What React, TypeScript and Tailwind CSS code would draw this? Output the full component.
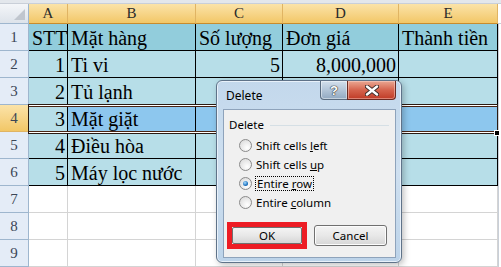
import React from "react";

const serif = { fontFamily: '"Liberation Serif", "Times New Roman", serif' };
const ui = { fontFamily: '"Noto Sans", "Open Sans", sans-serif' };

type Cell = { t?: string; r?: boolean };

const data: Cell[][] = [
  [{ t: "STT" }, { t: "Mặt hàng" }, { t: "Số lượng" }, { t: "Đơn giá" }, { t: "Thành tiền" }],
  [{ t: "1", r: true }, { t: "Ti vi" }, { t: "5", r: true }, { t: "8,000,000", r: true }, {}],
  [{ t: "2", r: true }, { t: "Tủ lạnh" }, {}, {}, {}],
  [{ t: "3", r: true }, { t: "Mặt giặt" }, {}, {}, {}],
  [{ t: "4", r: true }, { t: "Điều hòa" }, {}, {}, {}],
  [{ t: "5", r: true }, { t: "Máy lọc nước" }, {}, {}, {}],
  [{}, {}, {}, {}, {}],
  [{}, {}, {}, {}, {}],
  [{}, {}, {}, {}, {}],
];

function Radio({ checked }: { checked?: boolean }) {
  return (
    <span className="relative inline-flex items-center justify-center w-[13px] h-[13px] shrink-0 rounded-full border border-[#8a8a8a] bg-[radial-gradient(circle_at_65%_70%,#ffffff,#e2e2e2_70%,#d0d0d0)]">
      {checked && (
        <span className="w-[5px] h-[5px] rounded-full bg-[radial-gradient(circle_at_40%_35%,#a8dcff,#1f74c0_60%,#0b3f78)]" />
      )}
    </span>
  );
}

function Option({ pre, key1, post, checked }: { pre: string; key1: string; post: string; checked?: boolean }) {
  return (
    <div className="h-[15px] flex items-center gap-[4px]">
      <Radio checked={checked} />
      <span
        className={
          checked
            ? "border border-dotted border-black px-[1px] leading-[13px] -ml-[1px]"
            : "leading-[15px]"
        }
      >
        {pre}
        <u>{key1}</u>
        {post}
      </span>
    </div>
  );
}

export default function App() {
  return (
    <div className="relative w-[501px] h-[267px] overflow-hidden bg-white">
      <div className="h-[4px] bg-[#e3e7ec] border-b border-[#c9cfd8]" />
      <div className="grid grid-cols-[29px_39px_128px_87px_116px_99px_3px]" style={serif}>
        {/* header row */}
        <div className="h-[20px] flex items-end justify-end p-[3px] border-r border-b border-[#9eb6ce] bg-gradient-to-b from-[#f4f6f9] to-[#dde3ea]">
          <div className="w-0 h-0 border-l-[11px] border-l-transparent border-b-[11px] border-b-[#c0c6ce]" />
        </div>
        {["A", "B", "C", "D", "E"].map((c) => (
          <div
            key={c}
            className="h-[20px] flex items-center justify-center text-[15px] text-[#2a2a2a] border-r border-b border-r-[#e0b463] border-b-[#c88c2e] bg-gradient-to-b from-[#fbe3a8] to-[#f2c766]"
          >
            {c}
          </div>
        ))}
        <div className="h-[20px] border-b border-[#c9cfd8] bg-white" />

        {data.map((row, i) => {
          const rn = i + 1;
          const inTable = rn <= 6;
          const sel = rn === 4;
          return (
            <React.Fragment key={rn}>
              <div
                className={
                  "h-[27px] flex items-center justify-center text-[15px] text-[#3b4656] border-r border-b " +
                  (sel
                    ? "bg-gradient-to-b from-[#fbe3a8] to-[#f2c766] border-r-[#c88c2e] border-b-[#e0b463]"
                    : "bg-[#e4ecf7] border-[#9eb6ce]")
                }
              >
                {rn}
              </div>
              {row.map((c, j) => {
                let bg = "bg-white";
                if (inTable) bg = rn === 1 ? "bg-[#92cddc]" : "bg-[#b7dee8]";
                if (sel && j > 0) bg = "bg-[#8dc7ee]";
                return (
                  <div
                    key={j}
                    className={
                      "h-[27px] flex items-end overflow-visible whitespace-nowrap text-[20px] leading-[23px] text-black border-r border-b " +
                      (inTable ? "border-black " : "border-[#d4d4d4] ") +
                      bg +
                      (c.r ? " justify-end pr-[2px]" : " justify-start pl-[3px]")
                    }
                  >
                    {c.t}
                  </div>
                );
              })}
              <div className="h-[27px] bg-white border-l border-[#c9cfd8]" />
            </React.Fragment>
          );
        })}
      </div>

      {/* selection overlay on row 4 */}
      <div className="absolute left-[28px] top-[104px] w-[470px] h-[30px] border border-[#2a1a12] shadow-[inset_0_1px_0_#ffffff,inset_0_-1px_0_#ffffff,inset_0_2px_0_#4a2413,inset_0_-2px_0_#4a2413]" />
      <div className="absolute left-[494px] top-[130px] w-[6px] h-[6px] bg-black border border-white" />

      {/* Dialog window */}
      <div
        className="absolute left-[216px] top-[80px] w-[186px] h-[183px] flex flex-col rounded-[6px] border border-[#5f7389] bg-gradient-to-b from-[#c3d8ec] via-[#cfe0f0] to-[#bcd3e9] shadow-[inset_0_0_0_1px_#e8f1fa,2px_2px_6px_rgba(0,0,0,0.25)]"
        style={ui}
      >
        {/* title bar */}
        <div className="h-[28px] shrink-0 flex items-start pl-[9px] pr-[5px]">
          <div className="pt-[6px] text-[12px] leading-[18px] text-black">Delete</div>
          <div className="ml-auto flex">
            <div className="w-[28px] h-[19px] rounded-bl-[4px] border border-t-0 border-[#5a6c80] bg-gradient-to-b from-[#d4e0ec] via-[#b3c5d8] to-[#92a9c1] shadow-[inset_0_0_0_1px_rgba(255,255,255,0.45)] flex items-center justify-center">
              <span
                className="text-[13px] font-bold leading-none text-white [text-shadow:0_0_1px_#333,0_0_1px_#333,0_0_1px_#333]"
                style={{ fontFamily: '"Liberation Sans", Arial, sans-serif' }}
              >
                ?
              </span>
            </div>
            <div className="-ml-px w-[49px] h-[19px] rounded-br-[4px] border border-t-0 border-[#6b2a22] bg-gradient-to-b from-[#e9a793] via-[#d5634d] to-[#c03a26] shadow-[inset_0_0_0_1px_rgba(255,220,210,0.45)] flex items-center justify-center">
              <svg width="14" height="11" viewBox="0 0 14 11">
                <path d="M2 1.5 L12 9.5 M12 1.5 L2 9.5" stroke="#3a2a28" strokeWidth="4.2" strokeLinecap="round" />
                <path d="M2 1.5 L12 9.5 M12 1.5 L2 9.5" stroke="#ffffff" strokeWidth="2.4" strokeLinecap="round" />
              </svg>
            </div>
          </div>
        </div>

        {/* client area */}
        <div className="flex-1 ml-[6px] mr-[5px] mb-[4px] flex flex-col pt-[7px] px-[5px] pb-[8px] bg-[#f0f0f0] border border-[#8ea3bb] text-[11.5px] text-black">
          <div className="h-[16px] flex items-center gap-[6px] pr-[1px]">
            <span className="leading-[16px]">Delete</span>
            <div className="flex-1 h-px bg-[#d5dfe5]" />
          </div>

          <div className="mt-[5px] pl-[10px] flex flex-col gap-[4px]">
            <Option pre="Shift cells " key1="l" post="eft" />
            <Option pre="Shift cells " key1="u" post="p" />
            <Option pre="Entire " key1="r" post="ow" checked />
            <Option pre="Entire " key1="c" post="olumn" />
          </div>

          <div className="mt-auto -ml-[2px] flex items-center gap-[7px]">
            <div className="w-[80px] h-[27px] border-[5px] border-[#ed1c24]">
              <div className="w-full h-full rounded-[2px] border border-[#707070] bg-gradient-to-b from-[#f4f4f4] via-[#e8e8e8] to-[#d6d6d6] flex items-center justify-center">
                OK
              </div>
            </div>
            <div className="w-[73px] h-[21px] rounded-[3px] border border-[#707070] bg-gradient-to-b from-[#f4f4f4] via-[#e8e8e8] to-[#d6d6d6] shadow-[inset_0_0_0_1px_#fcfcfc] flex items-center justify-center">
              Cancel
            </div>
          </div>
        </div>
      </div>
    </div>
  );
}
